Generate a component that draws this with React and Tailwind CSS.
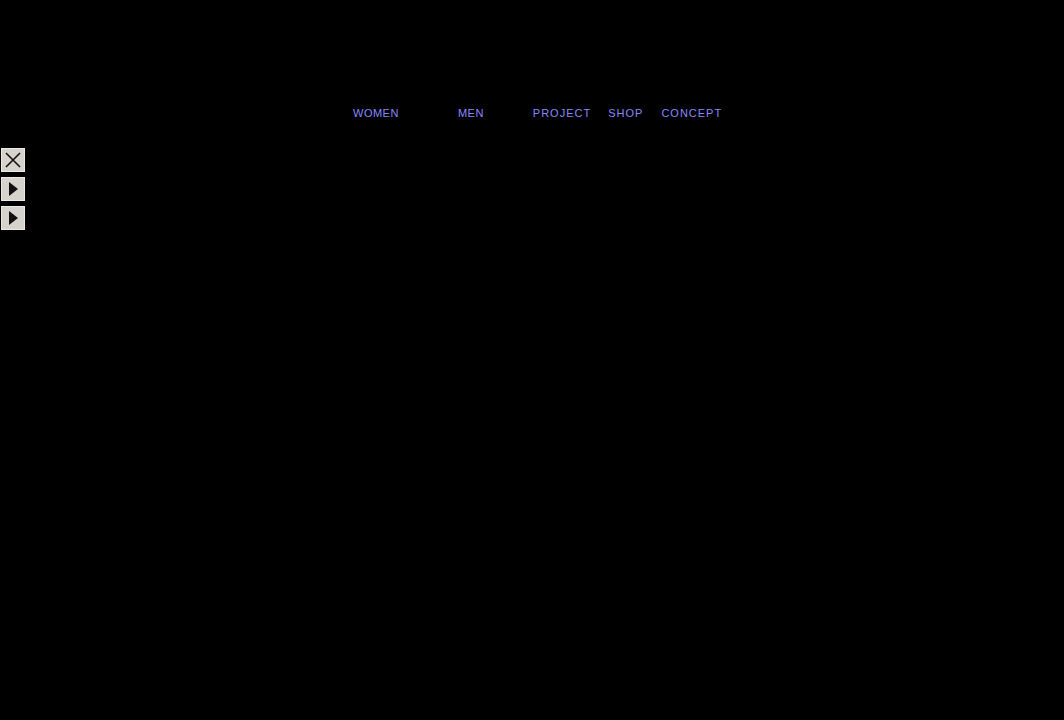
export default function App() {
  const items = [
    { label: "WOMEN", cls: "ml-[353px] tracking-[0.5px]" },
    { label: "MEN", cls: "ml-[59px] tracking-[0.5px]" },
    { label: "PROJECT", cls: "ml-[49px] tracking-[1px]" },
    { label: "SHOP", cls: "ml-[17px] tracking-[1px]" },
    { label: "CONCEPT", cls: "ml-[18px] tracking-[1px]" },
  ];

  return (
    <div className="w-[1064px] h-[720px] bg-black overflow-hidden font-['Liberation_Sans',Arial,sans-serif]">
      <nav className="flex pt-[107px] h-[148px]">
        {items.map((it) => (
          <a
            key={it.label}
            href="#"
            className={`${it.cls} text-[11px] leading-[13px] text-[#8888ff] h-[13px]`}
          >
            {it.label}
          </a>
        ))}
      </nav>
      <div className="flex flex-col gap-[5px] pl-[1px]">
        <button className="w-[24px] h-[24px] bg-[#d6d3cc] border border-[#ece9e4] flex items-center justify-center">
          <svg width="18" height="18" viewBox="0 0 18 18">
            <path d="M2 2 L16 16 M16 2 L2 16" stroke="#111" strokeWidth="1.6" fill="none" />
          </svg>
        </button>
        <button className="w-[24px] h-[24px] bg-[#d6d3cc] border border-[#ece9e4] flex items-center justify-center">
          <svg width="18" height="18" viewBox="0 0 18 18">
            <path d="M5 2 L14 9 L5 16 Z" fill="#111" />
          </svg>
        </button>
        <button className="w-[24px] h-[24px] bg-[#d6d3cc] border border-[#ece9e4] flex items-center justify-center">
          <svg width="18" height="18" viewBox="0 0 18 18">
            <path d="M5 2 L14 9 L5 16 Z" fill="#111" />
          </svg>
        </button>
      </div>
    </div>
  );
}
